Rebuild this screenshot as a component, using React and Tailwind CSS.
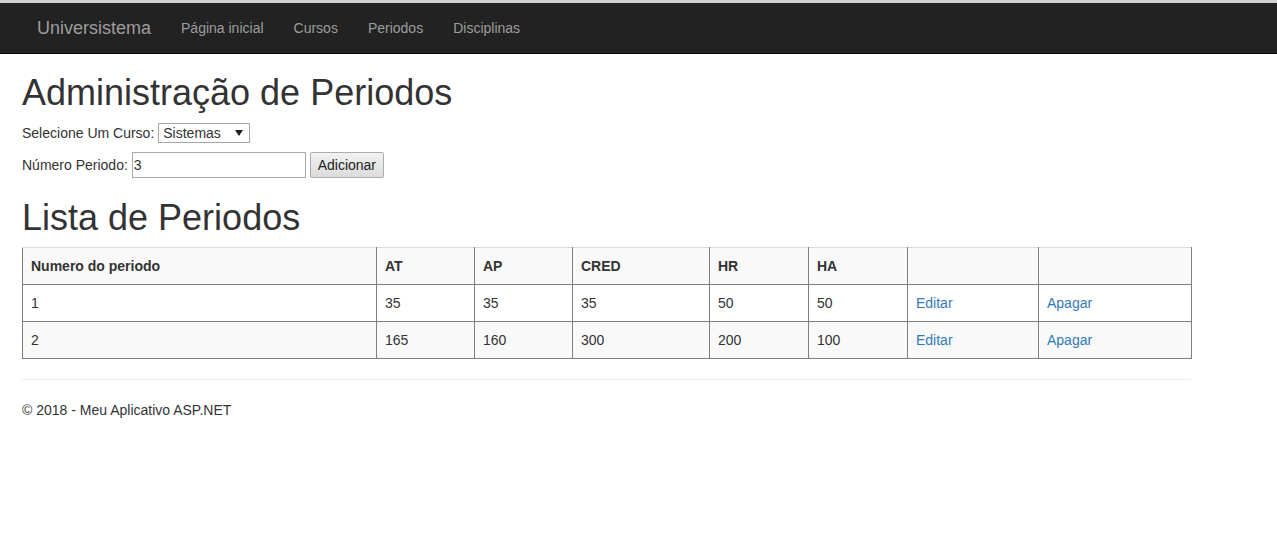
const periodos = [
  { numero: "1", at: "35", ap: "35", cred: "35", hr: "50", ha: "50" },
  { numero: "2", at: "165", ap: "160", cred: "300", hr: "200", ha: "100" },
];

const links = ["Página inicial", "Cursos", "Periodos", "Disciplinas"];

export default function App() {
  return (
    <div className="min-h-[540px] bg-white text-[14px] leading-5 text-[#333] font-['Liberation_Sans',Arial,sans-serif]">
      <div className="h-[3px] bg-[#d0d0d0]" />
      <nav className="h-[51px] bg-[#222] border-b border-[#080808] flex items-center pl-[22px]">
        <span className="px-[15px] text-[18px] leading-5 text-[#9d9d9d]">Universistema</span>
        {links.map((l) => (
          <span key={l} className="px-[15px] text-[14px] leading-5 text-[#9d9d9d]">
            {l}
          </span>
        ))}
      </nav>

      <div className="px-[22px]">
        <h1 className="mt-[19px] mb-[10px] text-[36px] leading-[39.6px] font-normal">
          Administração de Periodos
        </h1>
        <div className="flex items-center h-5">
          <span>Selecione Um Curso:</span>
          <div className="ml-1 w-[92px] h-5 border border-[#a6a6a6] bg-white flex items-center justify-between pl-1 pr-[6px]">
            <span className="text-[14px] leading-4">Sistemas</span>
            <svg width="8" height="6" viewBox="0 0 8 6">
              <path d="M0 0 L8 0 L4 6 Z" fill="#222" />
            </svg>
          </div>
        </div>
        <div className="flex items-center mt-[9px] h-[26px]">
          <span>Número Periodo:</span>
          <div className="ml-1 w-[174px] h-[26px] border border-[#a9a9a9] bg-white flex items-center pl-[1px]">
            3
          </div>
          <button className="ml-1 w-[74px] h-[26px] border border-[#adadad] rounded-[2px] bg-gradient-to-b from-[#f2f2f2] to-[#dcdcdc] text-[14px] text-[#222]">
            Adicionar
          </button>
        </div>

        <h1 className="mt-[20px] mb-[10px] text-[36px] leading-[39.6px] font-normal">Lista de Periodos</h1>

        <table className="table-fixed border-collapse w-[1169px]">
          <colgroup>
            <col className="w-[354px]" />
            <col className="w-[98px]" />
            <col className="w-[98px]" />
            <col className="w-[137px]" />
            <col className="w-[99px]" />
            <col className="w-[99px]" />
            <col className="w-[131px]" />
            <col className="w-[153px]" />
          </colgroup>
          <thead>
            <tr className="bg-[#f9f9f9] h-[37px]">
              {["Numero do periodo", "AT", "AP", "CRED", "HR", "HA", "", ""].map((h, i) => (
                <th
                  key={i}
                  className="text-left font-bold px-2 border-x border-b border-[#808080] border-t-[#dddddd] border-t"
                >
                  {h}
                </th>
              ))}
            </tr>
          </thead>
          <tbody>
            {periodos.map((p, i) => (
              <tr key={p.numero} className={`h-[37px] ${i % 2 === 1 ? "bg-[#f9f9f9]" : "bg-white"}`}>
                {[p.numero, p.at, p.ap, p.cred, p.hr, p.ha].map((v, j) => (
                  <td key={j} className="px-2 border border-[#808080]">
                    {v}
                  </td>
                ))}
                <td className="px-2 border border-[#808080] text-[#337ab7]">Editar</td>
                <td className="px-2 border border-[#808080] text-[#337ab7]">Apagar</td>
              </tr>
            ))}
          </tbody>
        </table>

        <hr className="mt-[20px] mb-[20px] w-[1169px] border-0 border-t border-[#eeeeee]" />
        <footer>
          <p>© 2018 - Meu Aplicativo ASP.NET</p>
        </footer>
      </div>
    </div>
  );
}
